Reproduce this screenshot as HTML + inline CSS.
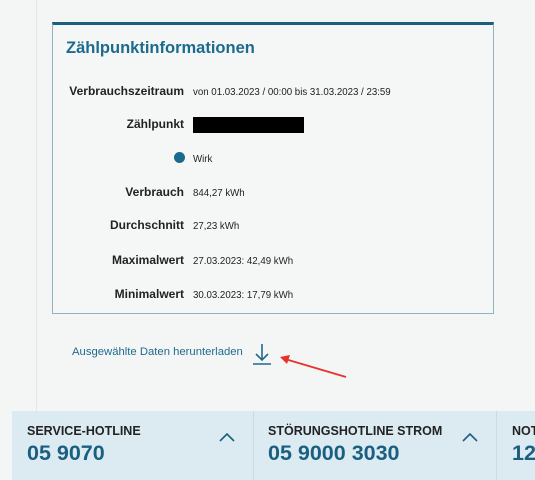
<!DOCTYPE html>
<html><head><meta charset="utf-8"><style>
body{margin:0;width:535px;height:480px;background:#f4f6f6;font-family:"Liberation Sans",sans-serif;position:relative;overflow:hidden}
.vl{position:absolute;left:36px;top:0;width:1px;height:411px;background:#e2e6e8}
.card{position:absolute;left:52px;top:22px;width:440px;height:288px;border:1px solid #8fb2c4;border-top:3px solid #1a5f80;background:#f5f7f7}
.t{position:absolute;left:13px;top:14px;font-size:16.5px;font-weight:bold;color:#1c6a8e}
.r{position:absolute;left:0;width:440px;height:16px;font-size:11px;color:#222}
.r b{position:absolute;right:309px;top:0px;font-size:12px;white-space:nowrap}
.r span{position:absolute;left:140px;top:3px;font-size:9.7px;white-space:nowrap}
.link{position:absolute;left:72px;top:346px;font-size:11.3px;color:#1f6a8e}
.foot{position:absolute;left:12px;top:411px;width:523px;height:69px;background:#dcebf1;overflow:hidden}
.c{position:absolute;top:0;height:69px;border-right:1px solid #c9dce4}
.c .h{position:absolute;left:15px;top:13px;font-size:12.5px;font-weight:bold;color:#222;white-space:nowrap}
.c .n{position:absolute;left:15px;top:30px;font-size:21.5px;font-weight:bold;color:#1a5f80;white-space:nowrap}
.c svg{position:absolute;top:21px}
</style></head><body>
<div class="vl"></div>
<div class="card">
<div class="t">Zählpunktinformationen</div>
<div class="r" style="top:59px"><b>Verbrauchszeitraum</b><span>von 01.03.2023 / 00:00 bis 31.03.2023 / 23:59</span></div>
<div class="r" style="top:92px"><b>Zählpunkt</b><span style="top:0px;width:111px;height:16px;background:#000"></span></div>
<div class="r" style="top:126px"><b style="right:308px;top:1px;width:11px;height:11px;border-radius:50%;background:#1a6a8e"></b><span>Wirk</span></div>
<div class="r" style="top:160px"><b>Verbrauch</b><span>844,27 kWh</span></div>
<div class="r" style="top:193px"><b>Durchschnitt</b><span>27,23 kWh</span></div>
<div class="r" style="top:228px"><b>Maximalwert</b><span>27.03.2023: 42,49 kWh</span></div>
<div class="r" style="top:262px"><b>Minimalwert</b><span>30.03.2023: 17,79 kWh</span></div>
</div>
<div class="link">Ausgewählte Daten herunterladen</div>
<svg style="position:absolute;left:250px;top:342px" width="24" height="24"><path d="M12 2V18M6 12L12 18L18 12" stroke="#1f6a8e" stroke-width="1.6" fill="none"/><path d="M3 22H21" stroke="#1f6a8e" stroke-width="1.6"/></svg>
<svg style="position:absolute;left:275px;top:350px" width="80" height="32"><path d="M71 27L10 9" stroke="#e8322a" stroke-width="1.8"/><path d="M5 7L15 5L12 14Z" fill="#e8322a"/></svg>
<div class="foot">
<div class="c" style="left:0;width:241px"><div class="h">SERVICE-HOTLINE</div><div class="n">05 9070</div><svg style="left:207px" width="16" height="10"><path d="M1 9L8 2L15 9" stroke="#1a5f80" stroke-width="1.6" fill="none"/></svg></div>
<div class="c" style="left:241px;width:243px"><div class="h">STÖRUNGSHOTLINE STROM</div><div class="n">05 9000 3030</div><svg style="left:209px" width="16" height="10"><path d="M1 9L8 2L15 9" stroke="#1a5f80" stroke-width="1.6" fill="none"/></svg></div>
<div class="c" style="left:485px;width:38px;border:none;overflow:hidden"><div class="h">NOTRUF</div><div class="n">128</div></div>
</div>
</body></html>
